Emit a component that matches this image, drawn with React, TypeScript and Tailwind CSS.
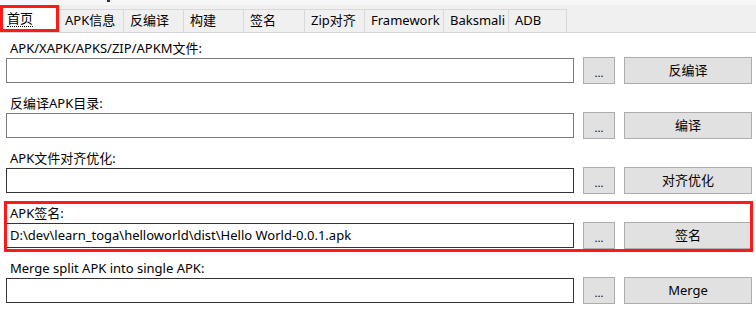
import type { FC } from 'react';

const tabs = [
  { name: '首页', w: 'w-[59px]' },
  { name: 'APK信息', w: 'w-[65px]' },
  { name: '反编译', w: 'w-[60px]' },
  { name: '构建', w: 'w-[60px]' },
  { name: '签名', w: 'w-[61px]' },
  { name: 'Zip对齐', w: 'w-[60px]' },
  { name: 'Framework', w: 'w-[79px]' },
  { name: 'Baksmali', w: 'w-[65px]' },
  { name: 'ADB', w: 'w-[58px]' },
];

interface RowProps {
  label: string;
  action: string;
  value?: string;
  dark?: boolean;
  highlight?: boolean;
}

const Row: FC<RowProps> = ({ label, action, value, dark, highlight }) => {
  return (
    <div className="relative mb-[11px] flex flex-col">
      {highlight && (
        <div className="pointer-events-none absolute -top-[4px] -bottom-[3px] left-[4px] right-[3px] border-[3px] border-[#ff1a1a]" />
      )}
      <div className="h-[17px] pl-[10px] text-[13px] leading-[17px] text-black">{label}</div>
      <div className="flex h-[27px] items-stretch">
        <div
          className={`ml-[6px] flex w-[568px] items-center border bg-white px-[3px] text-[13px] text-black ${
            dark ? 'border-[#333333]' : 'border-[#7a7a7a]'
          } my-[1px]`}
        >
          {value}
        </div>
        <button
          type="button"
          className="ml-[9px] w-[32px] border border-[#adadad] bg-[#e1e1e1] pt-[4px] text-[11px] leading-none text-black"
        >
          ...
        </button>
        <button
          type="button"
          className="ml-[9px] w-[128px] border border-[#adadad] bg-[#e1e1e1] text-[13px] text-black"
        >
          {action}
        </button>
      </div>
    </div>
  );
};

const App: FC = () => {
  return (
    <div
      className="h-[312px] w-[756px] overflow-hidden bg-white"
      style={{ fontFamily: '"Noto Sans", "Noto Sans CJK SC", sans-serif' }}
    >
      <div className="bg-[#f0f0f0]">
        <div className="flex h-[5px] bg-[#f7f7f7]">
          <div className="ml-[107px] h-[2px] w-[3px] bg-[#333333]" />
        </div>
        <div className="flex h-[28px] items-end border-b border-[#d5d5d5]">
          {tabs.map((t, i) =>
            i === 0 ? (
              <div
                key={t.name}
                className={`relative flex h-[27px] ${t.w} items-center border-[3px] border-[#ff1a1a] bg-white pl-[4px] text-[13px] text-black`}
              >
                <span className="border-b border-dotted border-black leading-[16px]">{t.name}</span>
              </div>
            ) : (
              <div
                key={t.name}
                className={`flex h-[23px] ${t.w} items-center border-r border-t border-[#d9d9d9] bg-[#f0f0f0] pl-[6px] text-[13px] text-black`}
              >
                {t.name}
              </div>
            )
          )}
        </div>
      </div>
      <div className="pt-[7px]">
        <Row label="APK/XAPK/APKS/ZIP/APKM文件:" action="反编译" />
        <Row label="反编译APK目录:" action="编译" />
        <Row label="APK文件对齐优化:" action="对齐优化" dark />
        <Row
          label="APK签名:"
          action="签名"
          dark
          highlight
          value="D:\dev\learn_toga\helloworld\dist\Hello World-0.0.1.apk"
        />
        <Row label="Merge split APK into single APK:" action="Merge" dark />
      </div>
    </div>
  );
};

export default App;
